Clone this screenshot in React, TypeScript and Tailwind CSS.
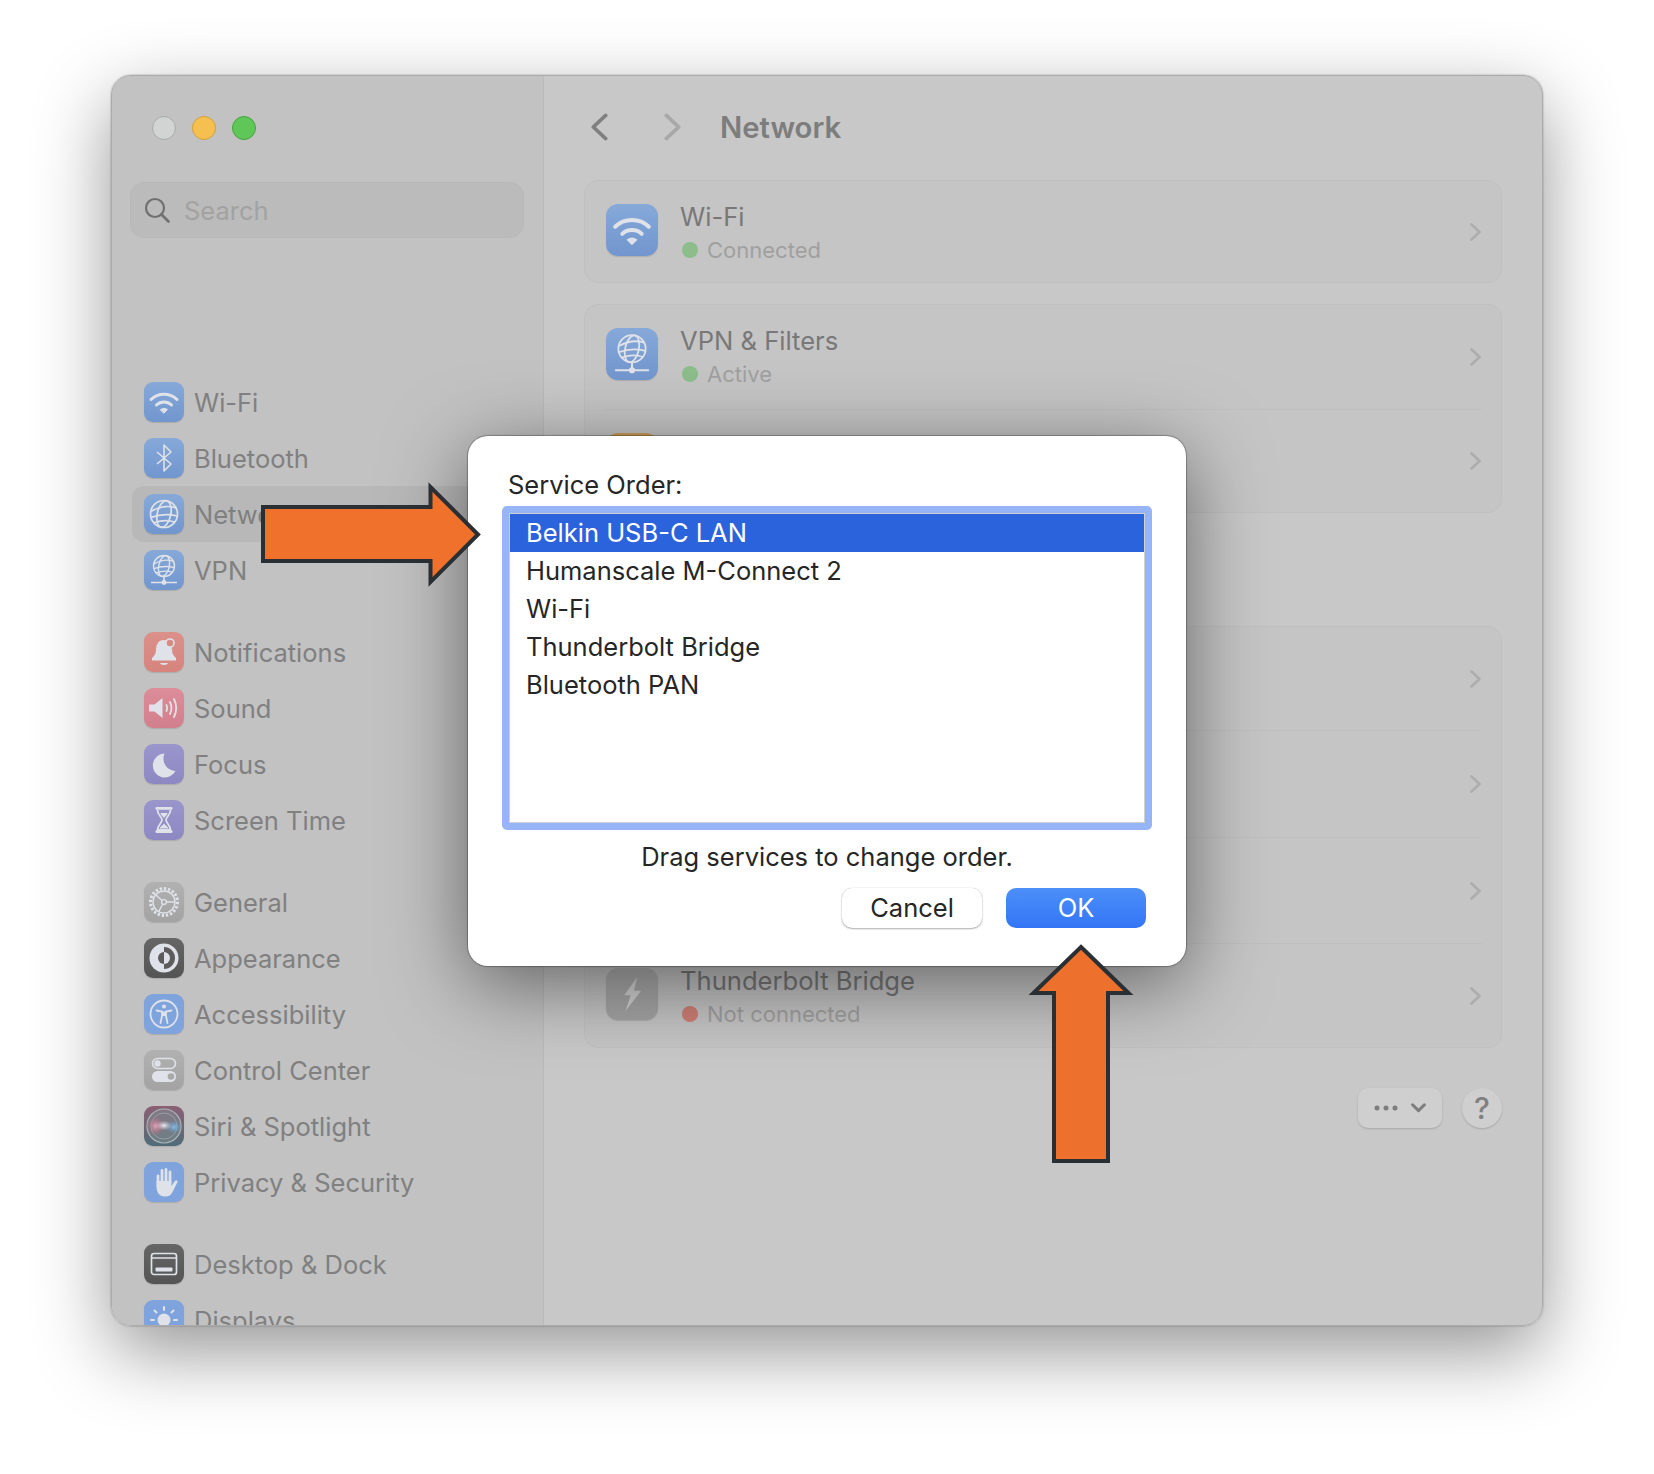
import React from "react";

const W = "#dfe2e8";

const wifi = (
  <g fill="none" stroke={W} strokeWidth="3" strokeLinecap="round">
    <path d="M7 17.5C14 10.5 26 10.5 33 17.5" />
    <path d="M12.5 23C16.5 19 23.5 19 27.5 23" />
    <path d="M16.5 27.5Q20 25 23.5 27.5L20 31Z" fill={W} strokeWidth="1" strokeLinejoin="round" />
  </g>
);
const bluetooth = (
  <path d="M13 14L27 26L20 33V7L27 14L13 26" fill="none" stroke={W} strokeWidth="1.6" strokeLinejoin="round" />
);
const globeLines = (cx: number, cy: number, r: number, w: number) => (
  <g fill="none" stroke={W} strokeWidth={w}>
    <circle cx={cx} cy={cy} r={r} />
    <ellipse cx={cx} cy={cy} rx={r * 0.5} ry={r} transform={`rotate(12 ${cx} ${cy})`} />
    <path d={`M${cx - r * 0.95} ${cy - r * 0.2}Q${cx} ${cy - r * 0.75} ${cx + r * 0.9} ${cy - r * 0.45}`} />
    <path d={`M${cx - r * 0.95} ${cy + r * 0.25}Q${cx} ${cy - r * 0.1} ${cx + r * 0.98} ${cy + r * 0.15}`} />
    <path d={`M${cx - r * 0.75} ${cy + r * 0.65}Q${cx + r * 0.1} ${cy + r * 0.35} ${cx + r * 0.8} ${cy + r * 0.6}`} />
  </g>
);
const globe = globeLines(20, 20, 13.5, 1.7);
const vpn = (
  <g>
    {globeLines(20, 16, 10.5, 1.4)}
    <path d="M20 27V31M7 32.5H33" stroke={W} strokeWidth="1.6" fill="none" />
    <circle cx="20" cy="32.5" r="2.4" fill={W} />
  </g>
);
const bell = (
  <g fill={W}>
    <path d="M20 8C14 8 12 13 12 18C12 22 10 24 8 26V28.5H32V26C30 24 28 22 28 18C28 13 26 8 20 8Z" />
    <path d="M16 31H24C23.5 33.5 16.5 33.5 16 31Z" />
    <circle cx="26" cy="11" r="4" fill="#d98a82" stroke={W} strokeWidth="1.6" />
  </g>
);
const sound = (
  <g fill="none" stroke={W} strokeWidth="1.8" strokeLinecap="round">
    <path d="M5 16.5H10.5L18.5 10V30L10.5 23.5H5Z" fill={W} stroke="none" />
    <path d="M22.5 17Q24 20 22.5 23" />
    <path d="M26 14Q29 20 26 26" />
    <path d="M30 11Q34.5 20 30 29" />
  </g>
);
const moon = <path d="M20.5 9.5A12 12 0 1 0 31.5 27A12.5 12.5 0 0 1 20.5 9.5Z" fill={W} />;
const hourglass = (
  <g>
    <rect x="11.5" y="7" width="17" height="2.8" rx="1" fill={W} />
    <rect x="11.5" y="30.2" width="17" height="2.8" rx="1" fill={W} />
    <path d="M13.5 10C13.5 15 18 17 18 20C18 23 13.5 25 13.5 30H26.5C26.5 25 22 23 22 20C22 17 26.5 15 26.5 10" fill="none" stroke={W} strokeWidth="1.8" />
    <path d="M15.5 28.5C16.5 26 20 24.5 20 23C20 24.5 23.5 26 24.5 28.5Z" fill={W} />
    <path d="M16.5 13H23.5C23 15.5 20 17 20 18.5C20 17 17 15.5 16.5 13Z" fill={W} />
  </g>
);
const gear = (
  <g fill="none" stroke={W}>
    <circle cx="20" cy="20" r="13.5" strokeWidth="3" strokeDasharray="2.4 1.8" />
    <circle cx="20" cy="20" r="11" strokeWidth="1.4" />
    <circle cx="20" cy="20" r="2.4" strokeWidth="1.4" />
    <path d="M18 18.5L11.5 12.5M22.4 20H31M18.8 22L14.5 30" strokeWidth="1.4" />
  </g>
);
const appearance = (
  <g>
    <circle cx="20" cy="20" r="14.5" fill={W} />
    <path d="M20 9A11 11 0 0 1 20 31Z" fill="#5c5c5c" />
    <path d="M20 14A6 6 0 0 0 20 26Z" fill="#5c5c5c" />
    <path d="M20 14A6 6 0 0 1 20 26Z" fill={W} />
  </g>
);
const access = (
  <g fill="none" stroke={W}>
    <circle cx="20" cy="20" r="13.5" strokeWidth="1.8" />
    <circle cx="20" cy="12.5" r="2" fill={W} stroke="none" />
    <path d="M12.5 16.5L18 17.5V22L16.5 29M27.5 16.5L22 17.5V22L23.5 29" strokeWidth="1.8" strokeLinecap="round" />
    <path d="M18 17.5H22V22H18Z" fill={W} stroke="none" />
  </g>
);
const control = (
  <g>
    <rect x="8.5" y="8.5" width="23" height="10" rx="5" fill="none" stroke={W} strokeWidth="1.6" />
    <circle cx="13.5" cy="13.5" r="3.2" fill={W} />
    <rect x="8" y="21" width="24" height="11" rx="5.5" fill={W} />
    <circle cx="27" cy="26.5" r="3.3" fill="#a9a9a9" />
  </g>
);
const siri = (
  <g>
    <defs>
      <radialGradient id="sp">
        <stop offset="0" stopColor="#e3a3b6" />
        <stop offset="1" stopColor="#b9607a" stopOpacity="0" />
      </radialGradient>
      <radialGradient id="sb">
        <stop offset="0" stopColor="#86bde4" />
        <stop offset="1" stopColor="#5d92c6" stopOpacity="0" />
      </radialGradient>
      <radialGradient id="sw">
        <stop offset="0" stopColor="#eeeaf0" />
        <stop offset="1" stopColor="#cfc7d8" stopOpacity="0" />
      </radialGradient>
    </defs>
    <circle cx="20" cy="20" r="17" fill="#7f8c90" fillOpacity="0.55" stroke="#a9b6b8" strokeWidth="1.2" />
    <circle cx="20" cy="20" r="13" fill="none" stroke="#9ca8ad" strokeWidth="0.8" />
    <ellipse cx="11.5" cy="20" rx="9" ry="10" fill="url(#sp)" />
    <ellipse cx="30" cy="21" rx="8" ry="7" fill="url(#sb)" />
    <ellipse cx="20" cy="19.5" rx="8" ry="5" fill="url(#sw)" />
  </g>
);
const hand = (
  <g fill={W}>
    <path d="M14 24V14M18 21V8.5M22 21V7.5M26 21V10" stroke={W} strokeWidth="2.8" strokeLinecap="round" />
    <path d="M12.6 19H27.4V24L31 19C32 17.5 34 18.5 33.5 20L28.5 30C27 33 25 34.5 21 34.5C15 34.5 12.6 30 12.6 25Z" />
  </g>
);
const desktop = (
  <g>
    <rect x="7.5" y="9.5" width="25" height="21" rx="2.5" fill="none" stroke={W} strokeWidth="1.7" />
    <path d="M8 14H32" stroke={W} strokeWidth="1.4" />
    <rect x="11.5" y="23.5" width="17" height="4" rx="0.8" fill={W} />
  </g>
);
const sun = (
  <g stroke={W} strokeWidth="2" strokeLinecap="round">
    <circle cx="20" cy="20" r="6.5" fill={W} stroke="none" />
    <path d="M20 7V10M10.5 10.5L12.5 12.5M29.5 10.5L27.5 12.5M7 20H10M30 20H33" />
  </g>
);
const bolt = <path d="M24 7L14 21H19L15 33L27 17.5H21.5Z" fill="#d5d5d5" />;

function Tile({ bg, size, children }: { bg: string; size: string; children: React.ReactNode }) {
  return (
    <div className={`${size} ${bg} shrink-0 overflow-hidden shadow-[0_1px_1px_rgba(0,0,0,0.12)]`}>
      <svg viewBox="0 0 40 40" className="block h-full w-full">
        {children}
      </svg>
    </div>
  );
}

const blue = "bg-gradient-to-b from-[#86a9d9] to-[#7196ce]";
const gray = "bg-gradient-to-b from-[#b1b1b1] to-[#a3a3a3]";
const dark = "bg-gradient-to-b from-[#666666] to-[#545454]";
const red = "bg-gradient-to-b from-[#dc908a] to-[#d6847d]";
const pink = "bg-gradient-to-b from-[#dc8d98] to-[#d27f8c]";
const purple = "bg-gradient-to-b from-[#9a95cb] to-[#8d88c2]";

const groups: { label: string; bg: string; icon: React.ReactNode; selected?: boolean }[][] = [
  [
    { label: "Wi-Fi", bg: blue, icon: wifi },
    { label: "Bluetooth", bg: blue, icon: bluetooth },
    { label: "Network", bg: blue, icon: globe, selected: true },
    { label: "VPN", bg: blue, icon: vpn },
  ],
  [
    { label: "Notifications", bg: red, icon: bell },
    { label: "Sound", bg: pink, icon: sound },
    { label: "Focus", bg: purple, icon: moon },
    { label: "Screen Time", bg: purple, icon: hourglass },
  ],
  [
    { label: "General", bg: gray, icon: gear },
    { label: "Appearance", bg: dark, icon: appearance },
    { label: "Accessibility", bg: "bg-[#7fa3dc]", icon: access },
    { label: "Control Center", bg: gray, icon: control },
    { label: "Siri & Spotlight", bg: "bg-gradient-to-b from-[#8a5f73] to-[#4f6b78]", icon: siri },
    { label: "Privacy & Security", bg: "bg-[#7fa3dc]", icon: hand },
  ],
  [
    { label: "Desktop & Dock", bg: dark, icon: desktop },
    { label: "Displays", bg: "bg-[#7fa3dc]", icon: sun },
  ],
];

function Chevron({ dir = "right", className, sw = 2.4 }: { dir?: "left" | "right"; className: string; sw?: number }) {
  return (
    <svg viewBox="0 0 11 18" className={className} fill="none" stroke="currentColor" strokeWidth={sw} strokeLinecap="round" strokeLinejoin="round">
      <path d={dir === "right" ? "M1.5 1.5L9.5 9L1.5 16.5" : "M9.5 1.5L1.5 9L9.5 16.5"} />
    </svg>
  );
}

function Row({
  icon,
  bg,
  title,
  sub,
  dot,
  h,
  top = "mt-[23px]",
}: {
  icon?: React.ReactNode;
  bg?: string;
  title?: string;
  sub?: string;
  dot?: string;
  h: string;
  top?: string;
}) {
  return (
    <div className={`flex ${h} items-center justify-between pl-[21px] pr-[20px]`}>
      <div className={`flex items-start self-start ${top}`}>
        {bg ? (
          <Tile bg={bg} size="h-[52px] w-[52px] rounded-[12px]">
            {icon}
          </Tile>
        ) : null}
        {title ? (
          <div className="ml-[22px] -mt-[4px]">
            <div className="h-[34px] text-[25.6px] leading-[34px] text-[#787878]">{title}</div>
            <div className="flex h-[32px] items-center text-[22px] text-[#a0a0a0]">
              <span className={`mr-[9px] ml-[2px] h-[16px] w-[16px] rounded-full ${dot}`} />
              {sub}
            </div>
          </div>
        ) : null}
      </div>
      <Chevron className="h-[18px] w-[11px] text-[#adadad]" sw={2.6} />
    </div>
  );
}

const Divider = () => <div className="mx-[19px] h-px bg-[#bfbfbf]" />;

const services = ["Humanscale M-Connect 2", "Wi-Fi", "Thunderbolt Bridge", "Bluetooth PAN"];

export default function App() {
  return (
    <div className="h-[1474px] w-[1654px] overflow-hidden bg-white pl-[111px] pt-[75px] font-['Inter','Liberation_Sans',sans-serif]">
      <div className="relative h-[1251px] w-[1432px] rounded-[20px] shadow-[0_26px_76px_rgba(0,0,0,0.42),0_0_2px_rgba(0,0,0,0.35)]">
        <div className="flex h-full w-full overflow-hidden rounded-[20px] border border-[#ababab] bg-[#c8c8c8]">
          {/* sidebar */}
          <aside className="h-full w-[432px] shrink-0 border-r border-[#bababa] bg-[#c2c2c2]">
            <div className="ml-[40px] flex h-[104px] items-center gap-[16px]">
              <span className="h-[24px] w-[24px] rounded-full border border-[#a9a9a9] bg-[#d2d4d4]" />
              <span className="h-[24px] w-[24px] rounded-full border border-[#d39f3c] bg-[#f6c050]" />
              <span className="h-[24px] w-[24px] rounded-full border border-[#45a33e] bg-[#5fc757]" />
            </div>
            <div className="ml-[18px] mt-[2px] flex h-[56px] w-[394px] items-center rounded-[14px] border border-[#b8b8b8] bg-[#bbbbbb] pl-[13px]">
              <svg viewBox="0 0 26 26" className="h-[26px] w-[26px] text-[#707070]" fill="none" stroke="currentColor" strokeWidth="2.2" strokeLinecap="round">
                <circle cx="11" cy="11" r="9" />
                <path d="M17.5 17.5L24.5 24.5" strokeWidth="2.6" />
              </svg>
              <span className="ml-[14px] pt-[2px] text-[25.5px] text-[#a2a2a2]">Search</span>
            </div>
            <div className="mt-[136px] flex flex-col gap-[26px]">
              {groups.map((g, i) => (
                <div key={i} className="flex flex-col">
                  {g.map((it) => (
                    <div
                      key={it.label}
                      className={`ml-[20px] flex h-[56px] w-[394px] items-center rounded-[12px] pl-[12px] ${it.selected ? "bg-[#b8b8b8]" : ""}`}
                    >
                      <Tile bg={it.bg} size="h-[40px] w-[40px] rounded-[9px]">
                        {it.icon}
                      </Tile>
                      <span className="ml-[10px] pt-[2px] text-[25.5px] text-[#808080]">{it.label}</span>
                    </div>
                  ))}
                </div>
              ))}
            </div>
          </aside>

          {/* main */}
          <main className="flex-1 px-[40px]">
            <header className="flex h-[104px] items-center">
              <Chevron dir="left" className="mb-[2px] ml-[7px] h-[28px] w-[17px] text-[#808080]" />
              <Chevron className="mb-[2px] ml-[56px] h-[28px] w-[17px] text-[#a8a8a8]" />
              <h1 className="ml-[39px] text-[29.3px] font-semibold text-[#7d7d7d]">Network</h1>
            </header>
            <section className="rounded-[14px] border border-[#c0c0c0] bg-[#c5c5c5]">
              <Row h="h-[101px]" bg={blue} icon={wifi} title="Wi-Fi" sub="Connected" dot="bg-[#8cbd8a]" />
            </section>
            <section className="mt-[21px] rounded-[14px] border border-[#c0c0c0] bg-[#c5c5c5]">
              <Row h="h-[104px]" bg={blue} icon={vpn} title="VPN & Filters" sub="Active" dot="bg-[#8cbd8a]" />
              <Divider />
              <Row h="h-[102px]" bg="bg-[#cda05a]" />
            </section>
            <section className="mt-[113px] rounded-[14px] border border-[#c0c0c0] bg-[#c5c5c5]">
              <Row h="h-[103px]" />
              <Divider />
              <Row h="h-[106px]" />
              <Divider />
              <Row h="h-[105px]" />
              <Divider />
              <Row h="h-[103px]" bg={gray} icon={bolt} title="Thunderbolt Bridge" sub="Not connected" dot="bg-[#cf7f76]" top="mt-[24px]" />
            </section>
            <div className="mt-[40px] flex justify-end gap-[20px]">
              <div className="flex h-[40px] w-[84px] items-center justify-center gap-[13px] rounded-[10px] bg-[#cfcfcf] shadow-[0_1px_2px_rgba(0,0,0,0.18)]">
                <svg viewBox="0 0 24 6" className="h-[6px] w-[24px] text-[#7d7d7d]" fill="currentColor">
                  <circle cx="3" cy="3" r="2.5" />
                  <circle cx="12" cy="3" r="2.5" />
                  <circle cx="21" cy="3" r="2.5" />
                </svg>
                <svg viewBox="0 0 14 9" className="h-[10px] w-[15px] text-[#7d7d7d]" fill="none" stroke="currentColor" strokeWidth="2.8" strokeLinecap="round" strokeLinejoin="round">
                  <path d="M1.5 1.5L7 7L12.5 1.5" />
                </svg>
              </div>
              <div className="flex h-[40px] w-[40px] items-center justify-center rounded-full bg-[#cfcfcf] text-[30px] font-medium text-[#808080] shadow-[0_1px_2px_rgba(0,0,0,0.18)]">
                ?
              </div>
            </div>
          </main>
        </div>

        {/* dialog */}
        <div className="absolute left-[357px] top-[361px] h-[530px] w-[718px] rounded-[20px] bg-white pl-[34px] pt-[32px] text-[25.5px] text-[#262626] shadow-[0_18px_80px_rgba(0,0,0,0.5),0_0_1px_1px_rgba(0,0,0,0.28)]">
          <div className="h-[34px] pl-[6px] leading-[34px]">Service Order:</div>
          <div className="mt-[4px] h-[324px] w-[650px] rounded-[5px] bg-[#97b4f7] p-[7px]">
            <div className="h-full w-full border border-[#cfcfcf] bg-white">
              <div className="flex h-[38px] items-center bg-[#2b63dc] pl-[16px] text-white">Belkin USB-C LAN</div>
              {services.map((s) => (
                <div key={s} className="flex h-[38px] items-center pl-[16px]">
                  {s}
                </div>
              ))}
            </div>
          </div>
          <div className="mt-[10px] h-[34px] w-[650px] text-center leading-[34px]">Drag services to change order.</div>
          <div className="mt-[14px] flex w-[644px] justify-end gap-[24px]">
            <div className="flex h-[40px] w-[140px] items-center justify-center rounded-[10px] bg-white shadow-[0_1px_2px_rgba(0,0,0,0.3),0_0_1px_rgba(0,0,0,0.3)]">Cancel</div>
            <div className="flex h-[40px] w-[140px] items-center justify-center rounded-[10px] bg-gradient-to-b from-[#4c8ff8] to-[#3375f6] text-white">OK</div>
          </div>
        </div>

        {/* annotation arrows */}
        <svg className="absolute left-[148px] top-[405px] h-[110px] w-[224px]" viewBox="0 0 224 110">
          <path d="M4 27H171.5V7L219 54.5L171.5 102V81H4Z" fill="#ef712b" stroke="#2a2f33" strokeWidth="4" strokeLinejoin="miter" />
        </svg>
        <svg className="absolute left-[916px] top-[867px] h-[224px] w-[108px]" viewBox="0 0 108 224">
          <path d="M54 5L101.5 51H81V219H27V51H6.5Z" fill="#ed702c" stroke="#2a2f33" strokeWidth="4" strokeLinejoin="miter" />
        </svg>
      </div>
    </div>
  );
}
